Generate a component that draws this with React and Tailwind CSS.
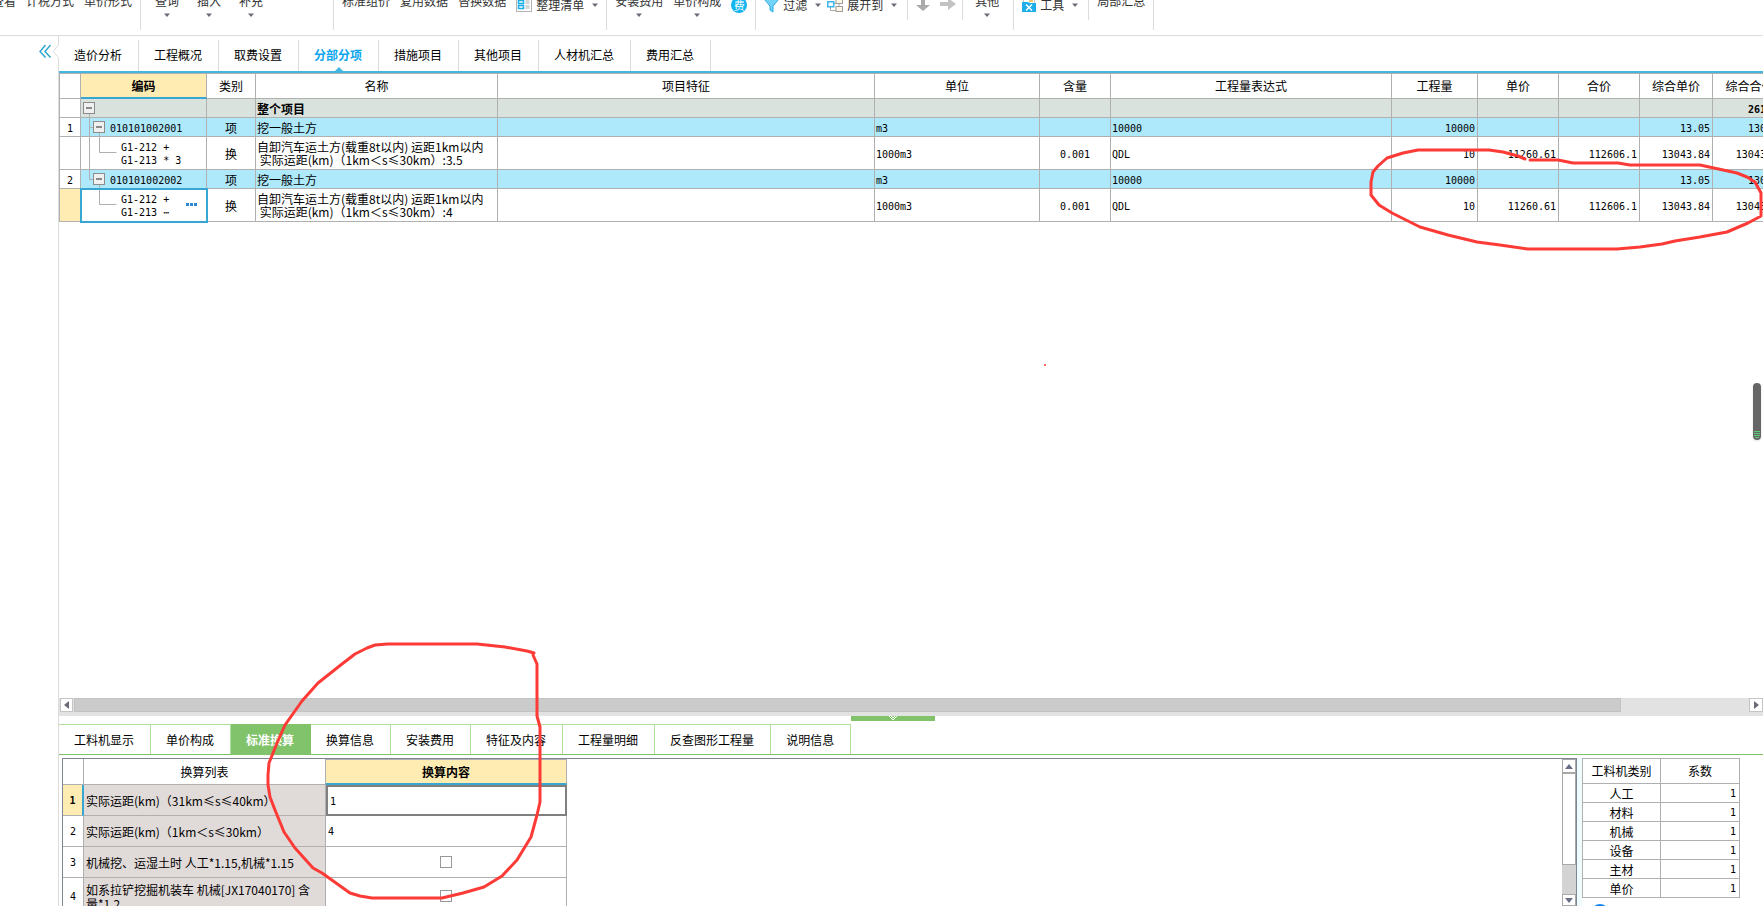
import React, { useState } from 'react';

const projectTabs = ['造价分析', '工程概况', '取费设置', '分部分项', '措施项目', '其他项目', '人材机汇总', '费用汇总'];

const detailTabs = ['工料机显示', '单价构成', '标准换算', '换算信息', '安装费用', '特征及内容', '工程量明细', '反查图形工程量', '说明信息'];

const columns = [
  { key: 'no', title: '', width: 'w-[21px]', align: 'text-center' },
  { key: 'code', title: '编码', width: 'w-[126px]', align: 'text-left' },
  { key: 'type', title: '类别', width: 'w-[49px]', align: 'text-center' },
  { key: 'name', title: '名称', width: 'w-[242px]', align: 'text-left' },
  { key: 'feature', title: '项目特征', width: 'w-[377px]', align: 'text-left' },
  { key: 'unit', title: '单位', width: 'w-[165px]', align: 'text-left' },
  { key: 'content', title: '含量', width: 'w-[71px]', align: 'text-center' },
  { key: 'expr', title: '工程量表达式', width: 'w-[281px]', align: 'text-left' },
  { key: 'qty', title: '工程量', width: 'w-[86px]', align: 'text-right' },
  { key: 'price', title: '单价', width: 'w-[81px]', align: 'text-right' },
  { key: 'total', title: '合价', width: 'w-[81px]', align: 'text-right' },
  { key: 'fullPrice', title: '综合单价', width: 'w-[73px]', align: 'text-right' },
  { key: 'fullTotal', title: '综合合价', width: 'w-[74px]', align: 'text-right' },
];

const rows = [
  { kind: 'root', name: '整个项目', fullTotal: '261000' },
  { kind: 'item', no: '1', code: '010101002001', type: '项', name: '挖一般土方', unit: 'm3', expr: '10000', qty: '10000', fullPrice: '13.05', fullTotal: '130500' },
  { kind: 'sub', code: 'G1-212 +\nG1-213 * 3', type: '换', name: '自卸汽车运土方(载重8t以内) 运距1km以内\n 实际运距(km)（1km＜s≤30km）:3.5', unit: '1000m3', content: '0.001', expr: 'QDL', qty: '10', price: '11260.61', total: '112606.1', fullPrice: '13043.84', fullTotal: '130438.4' },
  { kind: 'item', no: '2', last: true, code: '010101002002', type: '项', name: '挖一般土方', unit: 'm3', expr: '10000', qty: '10000', fullPrice: '13.05', fullTotal: '130500' },
  { kind: 'sub', selected: true, last: true, code: 'G1-212 +\nG1-213 ⋯', type: '换', name: '自卸汽车运土方(载重8t以内) 运距1km以内\n 实际运距(km)（1km＜s≤30km）:4', unit: '1000m3', content: '0.001', expr: 'QDL', qty: '10', price: '11260.61', total: '112606.1', fullPrice: '13043.84', fullTotal: '130438.4' },
];

const conversions = [
  { label: '实际运距(km)（31km≤s≤40km）', value: '1' },
  { label: '实际运距(km)（1km＜s≤30km）', value: '4' },
  { label: '机械挖、运湿土时 人工*1.15,机械*1.15', check: true },
  { label: '如系拉铲挖掘机装车 机械[JX17040170] 含量*1.2', check: true },
];

const factors = ['人工', '材料', '机械', '设备', '主材', '单价'];

const mono = "font-['DejaVu_Sans_Mono','Noto_Sans_CJK_SC',monospace] text-[10px]";

const Caret = () => (
  <svg width="6" height="4" viewBox="0 0 6 4" className="shrink-0">
    <path d="M0 0.5h6L3 4z" fill="#6b6b78" />
  </svg>
);

/* Grand bouton : texte au-dessus, flèche dessous */
const BigTool = ({ label, menu }) => (
  <button type="button" className="flex flex-col items-center gap-1 pt-2 leading-4 whitespace-nowrap shrink-0">
    {label}
    {menu && <Caret />}
  </button>
);

/* Petit bouton : icône, texte et flèche sur une ligne */
const SmallTool = ({ icon, label, menu }) => (
  <button type="button" aria-label={label || 'tool'} className="flex items-center h-4 mt-3 gap-1 leading-4 whitespace-nowrap shrink-0">
    {icon}
    {label}
    {menu && <span className="pl-1"><Caret /></span>}
  </button>
);

const Group = ({ className, short, children }) => (
  <div className={`flex items-start shrink-0 border-r border-[#dcdcdc] ${short ? 'h-[35px]' : 'h-[45px]'} ${className}`}>
    {children}
  </div>
);

const ListIcon = () => (
  <svg width="16" height="16" viewBox="0 0 16 16">
    <rect x="0.5" y="0.5" width="15" height="14" fill="#fff" stroke="#b5b5b5" />
    <path d="M2.5 3.5h5v3h-5zM2.5 8.5h5v3h-5z" fill="#fff" stroke="#1eaeea" strokeWidth="1.5" />
    <path d="M9.5 3h4v4h-4zM9.5 8h4v4h-4z" fill="#d5d5d5" />
  </svg>
);

const FeeIcon = () => (
  <span className="flex items-center justify-center w-4 h-4 rounded-full bg-[#14b4ee] text-white text-[11px] leading-4">费</span>
);

const FunnelIcon = () => (
  <svg width="15" height="16" viewBox="0 0 15 16">
    <path d="M0.500 2.500h14L9 9v6l-3-2V9z" fill="#74d2f7" stroke="#25aee8" />
  </svg>
);

const ExpandIcon = () => (
  <svg width="16" height="16" viewBox="0 0 16 16" fill="none">
    <path d="M7 6.500h3M3.500 10v3.500H9M12 6v4" stroke="#a5a5a5" />
    <rect x="0.750" y="4.750" width="6" height="5" fill="#f6fcff" stroke="#3db6ea" strokeWidth="1.500" />
    <rect x="9" y="1.500" width="6.500" height="5" fill="#fff6e6" stroke="#9c9c9c" />
    <rect x="9" y="9.500" width="6.500" height="5" fill="#fff6e6" stroke="#9c9c9c" />
  </svg>
);

const DownIcon = () => (
  <svg width="14" height="16" viewBox="0 0 14 16">
    <path d="M5 0h4v8h5l-7 6-7-6h5z" fill="#ababab" />
  </svg>
);

const RightIcon = () => (
  <svg width="16" height="16" viewBox="0 0 16 16">
    <path d="M0 5h8V1l8 6-8 6V9H0z" fill="#c2c2c2" />
  </svg>
);

const ToolIcon = () => (
  <svg width="14" height="16" viewBox="0 0 14 16">
    <path d="M1.500 0.500h11v6h-11z" fill="#fff" stroke="#c4c4c4" />
    <path d="M7 2h4v3H7z" fill="#f1c36b" />
    <path d="M0 5h6l2 1h6v9H0z" fill="#1eaeea" />
    <path d="M4 7.500l6 6M10 7.500l-6 6" stroke="#fff" strokeWidth="1.500" />
  </svg>
);

const Toolbar = () => (
  <header className="flex items-end h-9 shrink-0 overflow-hidden border-b border-[#dcdcdc] text-[#333]">
    <div className="flex items-start h-[50px] shrink-0">
      <Group className="-ml-2 gap-2.5 pr-2">
        <BigTool label="查看" />
        <BigTool label="计税方式" />
        <BigTool label="单价形式" />
      </Group>
      <Group className="gap-[18px] pl-3.5 pr-[70px]">
        <BigTool label="查询" menu />
        <BigTool label="插入" menu />
        <BigTool label="补充" menu />
      </Group>
      <Group className="gap-2.5 pl-2 pr-2">
        <BigTool label="标准组价" />
        <BigTool label="复用数据" />
        <BigTool label="替换数据" />
        <SmallTool icon={<ListIcon />} label="整理清单" menu />
      </Group>
      <Group className="gap-2.5 pl-2 pr-2">
        <BigTool label="安装费用" menu />
        <BigTool label="单价构成" menu />
        <SmallTool icon={<FeeIcon />} />
      </Group>
      <Group short className="gap-1.5 pl-2 pr-2.5">
        <SmallTool icon={<FunnelIcon />} label="过滤" menu />
        <SmallTool icon={<ExpandIcon />} label="展开到" menu />
      </Group>
      <Group short className="gap-2.5 pl-2 pr-1.5">
        <SmallTool icon={<DownIcon />} />
        <SmallTool icon={<RightIcon />} />
      </Group>
      <Group className="pl-3 pr-3.5">
        <BigTool label="其他" menu />
      </Group>
      <Group short className="pl-2 pr-2.5">
        <SmallTool icon={<ToolIcon />} label="工具" menu />
      </Group>
      <Group className="pl-2 pr-2">
        <BigTool label="局部汇总" />
      </Group>
    </div>
  </header>
);

const Minus = ({ x, y }) => (
  <g>
    <rect x={x + 0.5} y={y + 0.5} width="11" height="11" fill="#f0f0f0" stroke="#8c8c8c" />
    <path d={`M${x + 3} ${y + 6}h6`} stroke="#222" />
  </g>
);

/* Lignes de l'arborescence dans la colonne 编码 */
const Tree = ({ row }) => {
  if (row.kind === 'root') {
    return (
      <svg width="29" height="18" className="shrink-0">
        <path d="M8.500 14v4" stroke="#b0b0b0" />
        <Minus x={2} y={3} />
      </svg>
    );
  }
  if (row.kind === 'item') {
    return (
      <svg width="29" height="18" className="shrink-0">
        <path d={row.last ? 'M8.500 0v9.500h4M18.500 14v4' : 'M8.500 0v18M8.500 9.500h4M18.500 14v4'} stroke="#b0b0b0" fill="none" />
        <Minus x={12} y={3} />
      </svg>
    );
  }
  return (
    <svg width="40" height="32" className="shrink-0">
      <path d={row.last ? 'M18.500 0v15.500h17' : 'M8.500 0v32M18.500 0v15.500h17'} stroke="#b0b0b0" fill="none" />
    </svg>
  );
};

const rowBg = { root: 'bg-[#dae2de] font-bold', item: 'bg-[#aee8fb]', sub: 'bg-white' };

const Cell = ({ row, col }) => {
  const value = row[col.key];
  const line = 'border-r border-b border-[#b0b0b0]';

  if (col.key === 'no') {
    return <td className={`${line} ${mono} px-0 pb-0 pt-0.5 leading-[13px] text-center ${row.selected ? 'bg-[#ffecb3]' : 'bg-white'}`}>{value}</td>;
  }
  if (col.key === 'code') {
    return (
      <td className={`${line} ${mono} p-0 leading-[13px] ${rowBg[row.kind]} ${row.selected ? 'outline-2 -outline-offset-1 outline-[#38a6d3]' : ''}`}>
        <div className="flex items-center">
          <Tree row={row} />
          <span className="whitespace-pre pt-0.5">{value}</span>
          {row.selected && (
            <button type="button" aria-label="更多" className="ml-auto pr-2">
              <svg width="12" height="4" fill="#2f86d2">
                <path d="M0 0h3v3H0zM4 0h3v3H4zM8 0h3v3H8z" />
              </svg>
            </button>
          )}
        </div>
      </td>
    );
  }
  const cjk = col.key === 'name' || col.key === 'type';
  return (
    <td className={`${line} ${cjk ? 'text-xs pt-0' : `${mono} pt-0.5`} ${col.align} pb-0 ${col.align === 'text-right' ? 'px-0.5' : 'px-px'} leading-[13px] whitespace-pre overflow-hidden ${rowBg[row.kind]}`}>
      {value}
    </td>
  );
};

const BillTable = () => (
  <table className="table-fixed border-separate border-spacing-0 w-[1728px] border-l border-t border-[#b0b0b0]">
    <colgroup>
      {columns.map(c => <col key={c.key} className={c.width} />)}
    </colgroup>
    <thead>
      <tr className="h-[25px]">
        {columns.map(c => (
          <th
            key={c.key}
            className={`p-0 border-r ${
              c.key === 'code'
                ? 'font-bold bg-[#ffecb3] border-b-2 border-b-[#38a6d3] border-r-[#b0b0b0]'
                : 'font-normal border-b border-[#b0b0b0]'
            }`}
          >
            {c.title}
          </th>
        ))}
      </tr>
    </thead>
    <tbody>
      {rows.map((row, i) => (
        <tr key={i} className={row.kind === 'sub' ? 'h-[33px]' : 'h-[19px]'}>
          {columns.map(c => <Cell key={c.key} row={row} col={c} />)}
        </tr>
      ))}
    </tbody>
  </table>
);

const ConversionTable = () => (
  <table className="table-fixed border-separate border-spacing-0 w-[504px]">
    <colgroup>
      <col className="w-[21px]" />
      <col className="w-[242px]" />
      <col className="w-[241px]" />
    </colgroup>
    <thead>
      <tr className="h-[26px]">
        <th className="p-0 border-r border-b border-[#b0b0b0]"></th>
        <th className="p-0 font-normal border-r border-b border-[#b0b0b0]">换算列表</th>
        <th className="p-0 font-bold bg-[#ffecb3] border-t border-r border-b-2 border-[#b0b0b0] border-b-[#38a6d3]">换算内容</th>
      </tr>
    </thead>
    <tbody>
      {conversions.map((c, i) => (
        <tr key={i} className={i === 3 ? 'h-[37px]' : 'h-[31px]'}>
          <td
            className={`${mono} px-0 pb-0 pt-0.5 text-center border-b border-b-[#b0b0b0] ${
              i === 0 ? 'font-bold bg-[#ffecb3] border-r-2 border-r-[#38a6d3]' : 'border-r border-r-[#b0b0b0]'
            }`}
          >
            {i + 1}
          </td>
          <td className="pb-0 pt-0.5 pl-0.5 pr-2 leading-[14px] bg-[#e0dad8] border-r border-b border-[#b0b0b0]">
            <label htmlFor={`conv-${i}`}>{c.label}</label>
          </td>
          <td className={`p-0 h-px ${i === 0 ? 'border-2 border-[#808080]' : 'border-r border-b border-[#b0b0b0]'}`}>
            {c.check ? (
              <input id={`conv-${i}`} type="checkbox" className="block mx-auto w-3 h-3 appearance-none bg-white border border-[#999] checked:bg-[#38a6d3]" />
            ) : (
              <input id={`conv-${i}`} type="text" defaultValue={c.value} className={`${mono} block w-full px-0.5 pt-0.5 leading-5 outline-none`} />
            )}
          </td>
        </tr>
      ))}
    </tbody>
  </table>
);

const FactorTable = () => (
  <table className="table-fixed border-separate border-spacing-0 w-[158px] border-l border-t border-[#b0b0b0]">
    <thead>
      <tr className="h-[25px]">
        <th className="w-[78px] p-0 font-normal border-r border-b border-[#b0b0b0]">工料机类别</th>
        <th className="p-0 font-normal border-r border-b border-[#b0b0b0]">系数</th>
      </tr>
    </thead>
    <tbody>
      {factors.map(f => (
        <tr key={f} className="h-[19px]">
          <td className="px-0 pb-0 pt-0.5 text-center leading-4 border-r border-b border-[#b0b0b0]">{f}</td>
          <td className={`${mono} pb-0 pt-0.5 px-[3px] text-right leading-4 border-r border-b border-[#b0b0b0]`}>1</td>
        </tr>
      ))}
    </tbody>
  </table>
);

const Annotations = () => (
  <svg className="absolute left-0 top-0 w-full h-full pointer-events-none" fill="none" stroke="#fc3a36" strokeWidth="3" strokeLinejoin="round" strokeLinecap="round">
    <path d="M1525 159L1518 156 1503 152 1489 150H1418L1403 153 1387 158 1378 166 1373 172 1371 182V195L1379 205 1392 213 1420 227 1448 235 1477 242 1500 245 1528 249H1617L1640 247 1662 244 1675 241 1700 237 1727 232 1748 223 1761 216V193L1755 182 1747 177 1737 173 1700 165H1630L1618 163H1573L1558 160H1530" />
    <path d="M534 653L527 651 505 647 477 644H388L375 645 367 648 355 654 342 664 318 683 302 701 285 725 277 743 269 763 268 775V785L270 797 275 810 284 832 295 848 313 868 322 873 350 893 360 896 372 898H442L463 893 484 887 502 876 517 860 531 837 537 815 540 802V727L537 716V664L533 655" />
    <path d="M1045 365v0.100" strokeWidth="2" />
  </svg>
);

const App = () => {
  const [tab, setTab] = useState('分部分项');
  const [detail, setDetail] = useState('标准换算');

  return (
    <div className="relative flex flex-col h-screen overflow-hidden bg-white text-black text-xs font-['Noto_Sans_CJK_SC',sans-serif]">
      <Toolbar />

      <div className="flex flex-1 min-h-0">
        {/* Gouttière gauche */}
        <aside className="w-[59px] shrink-0 flex items-start justify-end border-r border-[#dcdcdc] pt-2">
          <button type="button" aria-label="收起" className="-mr-px">
            <svg width="20" height="15" viewBox="0 0 20 15" fill="none">
              <path d="M6.500 1L1 7.500l5.500 6M11.500 1L6 7.500l5.500 6" stroke="#2aa5d0" strokeWidth="1.400" />
              <path d="M19.500 1v13" stroke="#fff" />
              <path d="M19.500 1L14 7.500l5.500 6" stroke="#dcdcdc" />
            </svg>
          </button>
        </aside>

        <main className="flex flex-col flex-1 min-w-0">
          <nav className="flex items-end h-[37px] shrink-0 border-b-2 border-[#43b5e1]">
            {projectTabs.map(t => (
              <button
                key={t}
                type="button"
                onClick={() => setTab(t)}
                className={`relative h-[31px] pl-[15px] pr-4 pb-0.5 border-r border-[#dcdcdc] whitespace-nowrap ${t === tab ? 'font-bold text-[#0aa5ee]' : ''}`}
              >
                {t}
                {t === tab && (
                  <svg width="8" height="4" className="absolute bottom-0 left-1/2 -translate-x-1/2">
                    <path d="M4 0l4 4H0z" fill="#43b5e1" />
                  </svg>
                )}
              </button>
            ))}
          </nav>

          <div className="flex-1 min-h-0 overflow-hidden">
            <BillTable />
          </div>

          {/* Barre de défilement horizontale */}
          <div className="flex items-start h-[18px] shrink-0 bg-[#e2e2e2] pl-px">
            <button type="button" aria-label="向左" className="flex items-center justify-center w-[13px] h-3.5 bg-white border border-[#c4c4c4]">
              <svg width="5" height="8"><path d="M5 0v8L0 4z" fill="#6b6b78" /></svg>
            </button>
            <div className="flex-1 h-3.5 pl-px pr-32">
              <div className="h-full bg-[#cbcbcb] border border-[#c2c2c2]"></div>
            </div>
            <button type="button" aria-label="向右" className="flex items-center justify-center w-3.5 h-3.5 bg-white border border-[#c4c4c4]">
              <svg width="5" height="8"><path d="M0 0v8l5-4z" fill="#6b6b78" /></svg>
            </button>
          </div>

          <section className="flex flex-col h-[190px] shrink-0">
            <div className="h-2 pl-[792px] shrink-0">
              <button type="button" aria-label="折叠" className="flex justify-center w-[84px] h-[5px] bg-[#80c36b]">
                <svg width="10" height="5" fill="none" stroke="#fff"><path d="M1 0l4 4 4-4M3 0l2 2 2-2" /></svg>
              </button>
            </div>

            <nav className="flex h-[31px] shrink-0 border-b border-[#80c36b]">
              {detailTabs.map(t => (
                <button
                  key={t}
                  type="button"
                  onClick={() => setDetail(t)}
                  className={`h-[30px] pl-[15px] pr-4 border-t border-r whitespace-nowrap ${
                    t === detail ? 'font-bold text-white bg-[#80c36b] border-[#80c36b]' : 'border-[#aee09c]'
                  }`}
                >
                  {t}
                </button>
              ))}
            </nav>

            <div className="flex flex-1 min-h-0 pt-[3px] pl-[3px]">
              <div className="flex flex-1 min-w-0 overflow-hidden border-t border-l border-r border-[#7f8592]">
                <div className="flex-1 min-w-0">
                  <ConversionTable />
                </div>
                {/* Barre de défilement verticale */}
                <div className="flex flex-col w-3.5 shrink-0 bg-[#d3d3d3]">
                  <button type="button" aria-label="向上" className="flex items-center justify-center h-3.5 shrink-0 bg-white border border-[#a8a8a8]">
                    <svg width="8" height="5"><path d="M0 5h8L4 0z" fill="#6b6f85" /></svg>
                  </button>
                  <div className="h-[92px] shrink-0 bg-white border border-[#a8a8a8]"></div>
                  <div className="flex-1"></div>
                  <button type="button" aria-label="向下" className="flex items-center justify-center h-3 shrink-0 bg-white border border-[#a8a8a8]">
                    <svg width="8" height="5"><path d="M0 0h8L4 5z" fill="#6b6f85" /></svg>
                  </button>
                </div>
              </div>
              <aside className="w-[186px] shrink-0 overflow-hidden border-l-[5px] border-[#effcfe]">
                <FactorTable />
                <div className="pl-2.5 pt-1.5">
                  <svg width="16" height="16"><circle cx="8" cy="9" r="9" fill="#1a86f0" /></svg>
                </div>
              </aside>
            </div>
          </section>
        </main>
      </div>

      {/* Poignée flottante */}
      <div className="absolute right-0.5 top-[383px] flex flex-col justify-end items-center gap-px w-2 h-[57px] pb-0.5 rounded-full bg-[#666] shadow">
        <span className="w-1.5 h-px bg-[#5fc878]"></span>
        <span className="w-1.5 h-px bg-[#5fc878]"></span>
        <span className="w-1.5 h-px bg-[#5fc878]"></span>
        <span className="w-1 h-px bg-[#5fc878]"></span>
      </div>

      <Annotations />
    </div>
  );
};

export default App;
